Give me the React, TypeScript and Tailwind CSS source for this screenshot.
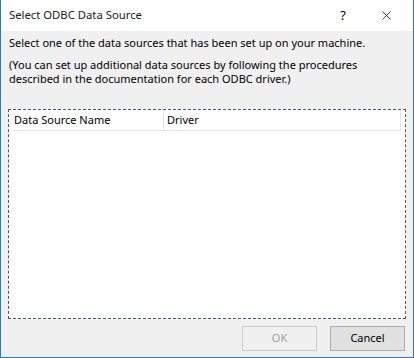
import { X } from "lucide-react";

const font = { fontFamily: '"Segoe UI", "Noto Sans", "Open Sans", sans-serif' };

export default function App() {
  return (
    <div
      className="flex h-[358px] w-[414px] flex-col border-x border-b border-[#2b79c2] bg-[#f0f0f0] text-[11px] text-black"
      style={font}
    >
      {/* title bar */}
      <div className="flex h-[31px] shrink-0 items-center bg-white pl-[8px]">
        <span className="flex-1 text-[11.3px] text-[#1a1a1a]">Select ODBC Data Source</span>
        <span className="mr-[33px] text-[13px]">?</span>
        <X className="mr-[19px] h-[15px] w-[15px]" strokeWidth={1.2} />
      </div>

      <div className="flex flex-1 flex-col px-[7px]">
        <p className="mt-[4px] pl-px leading-[16px]">
          Select one of the data sources that has been set up on your machine.
        </p>
        <p className="mt-[7px] pl-px leading-[14px]">
          (You can set up additional data sources by following the procedures
          <br />
          described in the documentation for each ODBC driver.)
        </p>

        {/* list */}
        <div className="mt-[23px] flex h-[210px] flex-col border border-dashed border-[#4a5a6e] bg-white px-[4px] pt-px">
          <div className="flex h-[20px] border-b border-[#e5e5e5]">
            <div className="flex w-[151px] items-center border-r border-[#e5e5e5] pl-[1px]">
              Data Source Name
            </div>
            <div className="flex flex-1 items-center border-r border-[#e5e5e5] pl-[3px]">Driver</div>
          </div>
        </div>

        {/* buttons */}
        <div className="mt-[7px] flex justify-end gap-[13px] pr-[1px]">
          <button
            disabled
            className="h-[25px] w-[75px] border border-[#cccccc] bg-[#f0f0f0] text-[#a0a0a0]"
          >
            OK
          </button>
          <button className="h-[25px] w-[75px] border border-[#adadad] bg-[#e1e1e1] text-black">
            Cancel
          </button>
        </div>
      </div>
    </div>
  );
}
